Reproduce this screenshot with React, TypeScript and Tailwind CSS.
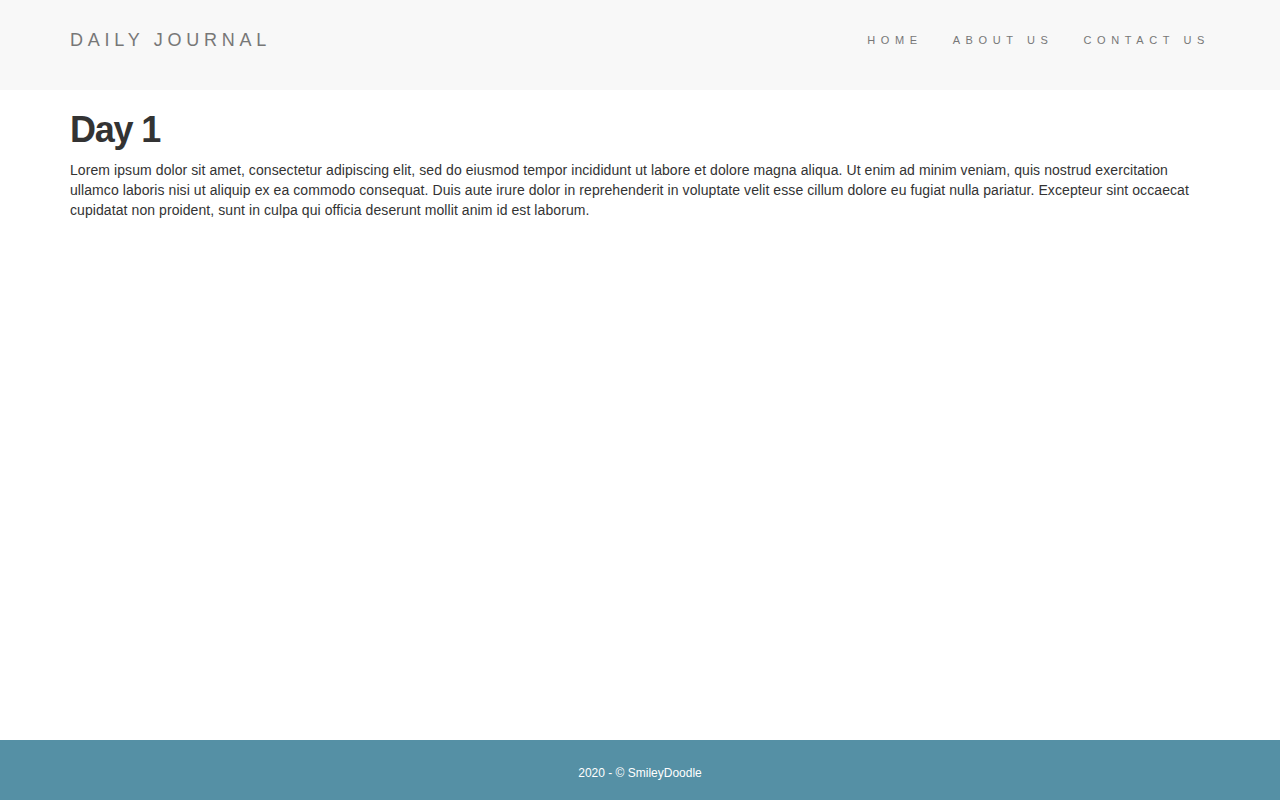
export default function App() {
  const font = { fontFamily: '"Liberation Sans", Arial, sans-serif' };
  return (
    <div className="min-h-[800px] flex flex-col bg-white" style={font}>
      <nav className="h-[90px] bg-[#f8f8f8] shrink-0">
        <div className="w-[1140px] mx-auto h-full flex items-center justify-between pb-[10px]">
          <a className="text-[18px] tracking-[4.75px] text-[#777] leading-[20px]">DAILY JOURNAL</a>
          <ul className="flex items-center mr-[-15px]">
            <li className="px-[15px] text-[11px] tracking-[5.6px] text-[#777]">HOME</li>
            <li className="px-[15px] text-[11px] tracking-[5.6px] text-[#777]">ABOUT US</li>
            <li className="px-[15px] text-[11px] tracking-[5.6px] text-[#777]">CONTACT US</li>
          </ul>
        </div>
      </nav>
      <main className="flex-1">
        <div className="w-[1140px] mx-auto">
          <h1 className="mt-[20px] mb-[10px] text-[36px] leading-[1.1] font-bold tracking-[-1.2px] text-[#333]">Day 1</h1>
          <p className="text-[14px] leading-[20px] tracking-[0.08px] text-[#333]">
            Lorem ipsum dolor sit amet, consectetur adipiscing elit, sed do eiusmod tempor incididunt ut labore et dolore magna aliqua. Ut enim ad minim veniam, quis nostrud exercitation ullamco laboris nisi ut aliquip ex ea commodo consequat. Duis aute irure dolor in reprehenderit in voluptate velit esse cillum dolore eu fugiat nulla pariatur. Excepteur sint occaecat cupidatat non proident, sunt in culpa qui officia deserunt mollit anim id est laborum.
          </p>
        </div>
      </main>
      <footer className="h-[60px] bg-[#5590a5] flex items-center justify-center shrink-0">
        <p className="text-[12px] text-white pt-[6px]">2020 - © SmileyDoodle</p>
      </footer>
    </div>
  );
}
